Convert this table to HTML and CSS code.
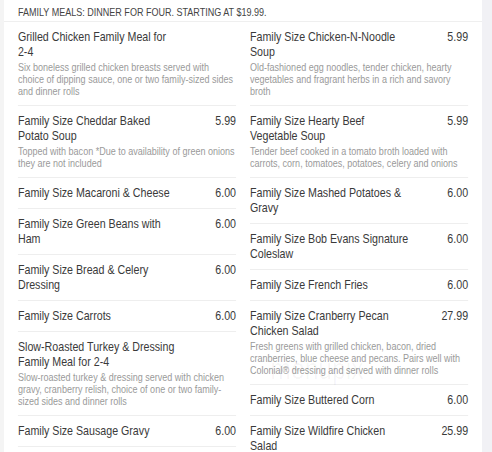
FILE: index.html
```html
<!DOCTYPE html>
<html>
<head>
<meta charset="utf-8">
<link rel="stylesheet" href="styles.css">
</head>
<body>
<div class="page">
  <div class="panel">
    <div class="header">Family Meals: Dinner for four. Starting at $19.99.</div>
    <div class="cols">
      <div class="col">
        <div class="item">
          <div class="row"><div class="name">Grilled Chicken Family Meal for <span class="nw">2-4</span></div><div class="price"></div></div>
          <div class="desc">Six boneless grilled chicken breasts served with choice of dipping sauce, one or two family-sized sides and dinner rolls</div>
        </div>
        <div class="item">
          <div class="row"><div class="name">Family Size Cheddar Baked Potato Soup</div><div class="price">5.99</div></div>
          <div class="desc">Topped with bacon *Due to availability of green onions they are not included</div>
        </div>
        <div class="item">
          <div class="row"><div class="name">Family Size Macaroni &amp; Cheese</div><div class="price">6.00</div></div>
        </div>
        <div class="item">
          <div class="row"><div class="name">Family Size Green Beans with Ham</div><div class="price">6.00</div></div>
        </div>
        <div class="item">
          <div class="row"><div class="name">Family Size Bread &amp; Celery Dressing</div><div class="price">6.00</div></div>
        </div>
        <div class="item">
          <div class="row"><div class="name">Family Size Carrots</div><div class="price">6.00</div></div>
        </div>
        <div class="item">
          <div class="row"><div class="name">Slow-Roasted Turkey &amp; Dressing Family Meal for <span class="nw">2-4</span></div><div class="price"></div></div>
          <div class="desc">Slow-roasted turkey &amp; dressing served with chicken gravy, cranberry relish, choice of one or two family-sized sides and dinner rolls</div>
        </div>
        <div class="item">
          <div class="row"><div class="name">Family Size Sausage Gravy</div><div class="price">6.00</div></div>
        </div>
      </div>
      <div class="col">
        <div class="item">
          <div class="row"><div class="name">Family Size Chicken-N-Noodle Soup</div><div class="price">5.99</div></div>
          <div class="desc">Old-fashioned egg noodles, tender chicken, hearty vegetables and fragrant herbs in a rich and savory broth</div>
        </div>
        <div class="item">
          <div class="row"><div class="name">Family Size Hearty Beef Vegetable Soup</div><div class="price">5.99</div></div>
          <div class="desc">Tender beef cooked in a tomato broth loaded with carrots, corn, tomatoes, potatoes, celery and onions</div>
        </div>
        <div class="item">
          <div class="row"><div class="name">Family Size Mashed Potatoes &amp; Gravy</div><div class="price">6.00</div></div>
        </div>
        <div class="item">
          <div class="row"><div class="name">Family Size Bob Evans Signature Coleslaw</div><div class="price">6.00</div></div>
        </div>
        <div class="item">
          <div class="row"><div class="name">Family Size French Fries</div><div class="price">6.00</div></div>
        </div>
        <div class="item">
          <div class="row"><div class="name">Family Size Cranberry Pecan Chicken Salad</div><div class="price">27.99</div></div>
          <div class="desc">Fresh greens with grilled chicken, bacon, dried cranberries, blue cheese and pecans. Pairs well with Colonial® dressing and served with dinner rolls</div>
        </div>
        <div class="item">
          <div class="row"><div class="name">Family Size Buttered Corn</div><div class="price">6.00</div></div>
        </div>
        <div class="item">
          <div class="row"><div class="name">Family Size Wildfire Chicken Salad</div><div class="price">25.99</div></div>
        </div>
      </div>
    </div>
    <div class="watermark">menupix</div>
  </div>
</div>
</body>
</html>
```
FILE: styles.css
```css
html, body {
  margin: 0;
  padding: 0;
}
body {
  width: 492px;
  height: 452px;
  overflow: hidden;
  background: #f1f1f5;
  font-family: "Liberation Sans", Arial, sans-serif;
  color: #333;
}
.page {
  height: 452px;
  border-left: 4px solid #f4f4f4;
}
.panel {
  position: relative;
  width: 583px;
  height: 452px;
  background: #fff;
  overflow: hidden;
  transform: scaleX(0.82);
  transform-origin: 0 0;
}
.header {
  height: 22px;
  line-height: 14px;
  padding: 5px 17px 0;
  box-sizing: border-box;
  font-size: 11px;
  text-transform: uppercase;
  color: #444;
  border-bottom: 1px solid #efefef;
}
.cols {
  display: grid;
  grid-template-columns: 266px 266px;
  column-gap: 17px;
  padding: 0 17px;
  align-items: start;
}
.item {
  padding: 7px 0 8px;
  border-bottom: 1px solid #eeeeee;
}
.row {
  display: flex;
  justify-content: space-between;
  font-size: 13px;
  line-height: 15px;
  color: #3a3a3a;
}
.name {
  width: 198px;
}
.nw {
  white-space: nowrap;
}
.price {
  text-align: right;
}
.desc {
  margin-top: 2px;
  font-size: 11px;
  line-height: 12px;
  color: #9a9a9a;
}
.watermark {
  position: absolute;
  left: 325px;
  top: 352px;
  font-size: 30px;
  color: rgba(0, 0, 0, 0.04);
  pointer-events: none;
}
```
